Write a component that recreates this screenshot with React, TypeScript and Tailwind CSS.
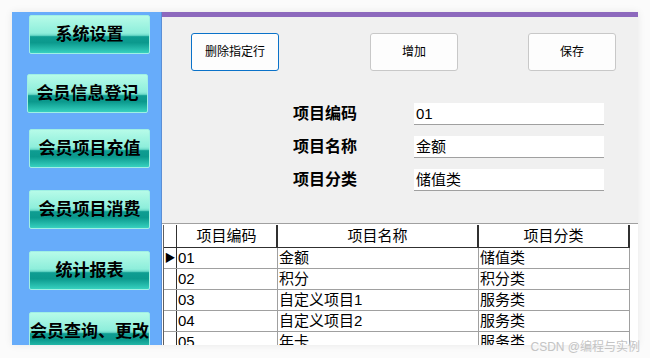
const menu = [
  { label: "系统设置", mt: "mt-[3px]", ml: "ml-[17px]" },
  { label: "会员信息登记", mt: "mt-[20px]", ml: "ml-[15px]" },
  { label: "会员项目充值", mt: "mt-[16px]", ml: "ml-[17px]" },
  { label: "会员项目消费", mt: "mt-[22px]", ml: "ml-[17px]" },
  { label: "统计报表", mt: "mt-[22px]", ml: "ml-[17px]" },
  { label: "会员查询、更改", mt: "mt-[22px]", ml: "ml-[17px]" },
];

const rows = [
  ["01", "金额", "储值类"],
  ["02", "积分", "积分类"],
  ["03", "自定义项目1", "服务类"],
  ["04", "自定义项目2", "服务类"],
  ["05", "年卡", "服务类"],
];

const fields = [
  { label: "项目编码", value: "01" },
  { label: "项目名称", value: "金额" },
  { label: "项目分类", value: "储值类" },
];

const cjk = "font-['Liberation_Sans','Noto_Sans_CJK_SC',sans-serif]";

export default function App() {
  return (
    <div className={`relative w-[650px] h-[358px] bg-[#fbfbfb] p-[12px] overflow-hidden ${cjk}`}>
      <div className="flex w-[626px] h-[333px] shadow-[0_0_8px_rgba(0,0,0,0.08)] overflow-hidden">
        {/* Left menu */}
        <div className="w-[149px] shrink-0 bg-[#67acfa] flex flex-col">
          {menu.map((m) => (
            <button
              key={m.label}
              className={`${m.mt} ${m.ml} w-[121px] h-[39px] shrink-0 rounded-[2px] border border-[#9ff0e4] bg-[linear-gradient(to_bottom,#b6fbe8_0%,#8eeedb_46%,#6fdccb_52%,#0f9d92_56%,#0b998d_72%,#37d1bf_100%)] text-[17px] font-bold text-black whitespace-nowrap flex items-center justify-center`}
            >
              {m.label}
            </button>
          ))}
        </div>

        {/* Right panel */}
        <div className="flex-1 flex flex-col border-l border-[#5b8fd6] bg-[#f0f0f0]">
          <div className="h-[5px] bg-[#8d69bd] shrink-0" />

          <div className="flex mt-[16px] h-[38px]">
            <button className="ml-[29px] w-[88px] h-[38px] rounded-[3px] border border-[#0a72c9] bg-[#fdfdfd] text-[12px] text-black">
              删除指定行
            </button>
            <button className="ml-[91px] w-[88px] h-[38px] rounded-[3px] border border-[#c8c8c8] bg-[#fdfdfd] text-[12px] text-black">
              增加
            </button>
            <button className="ml-[70px] w-[88px] h-[38px] rounded-[3px] border border-[#c8c8c8] bg-[#fdfdfd] text-[12px] text-black">
              保存
            </button>
          </div>

          <div className="flex flex-col gap-[11px] mt-[32px]">
            {fields.map((f) => (
              <div key={f.label} className="flex items-center h-[22px]">
                <div className="ml-[131px] w-[121px] text-[16px] font-bold text-black">{f.label}</div>
                <div className="w-[190px] h-[22px] bg-white border-b border-[#a0a0a0] text-[15px] text-black pl-[2px] leading-[22px]">
                  {f.value}
                </div>
              </div>
            ))}
          </div>

          {/* Grid */}
          <div className="mt-[32px] flex-1 border-t border-[#a0a0a0] bg-white pt-[1px] pl-[1px]">
            <div className="w-[467px] text-[15px] text-black border-l border-[#606060]">
              <div className="flex h-[23px] border-b border-[#303030] bg-white">
                <div className="w-[13px] border-r border-[#303030]" />
                <div className="w-[101px] border-r-2 border-[#303030] text-center leading-[22px]">项目编码</div>
                <div className="w-[201px] border-r-2 border-[#303030] text-center leading-[22px]">项目名称</div>
                <div className="w-[151px] border-r-2 border-[#303030] text-center leading-[22px]">项目分类</div>
              </div>
              {rows.map((r, i) => (
                <div key={r[0]} className="flex h-[21px] border-b border-[#a0a0a0]">
                  <div className="w-[13px] border-r border-[#303030] flex items-center justify-center">
                    {i === 0 && <span className="text-[11px] leading-none">▶</span>}
                  </div>
                  <div className="w-[101px] border-r border-[#a0a0a0] pl-[1px] leading-[20px]">{r[0]}</div>
                  <div className="w-[201px] border-r border-[#a0a0a0] pl-[1px] leading-[20px]">{r[1]}</div>
                  <div className="w-[151px] border-r border-[#a0a0a0] pl-[1px] leading-[20px]">{r[2]}</div>
                </div>
              ))}
            </div>
          </div>
        </div>
      </div>

      <div className="absolute right-[10px] bottom-[5px] text-[12px] leading-none text-[#c4c4c4]">CSDN @编程与实例</div>
    </div>
  );
}
